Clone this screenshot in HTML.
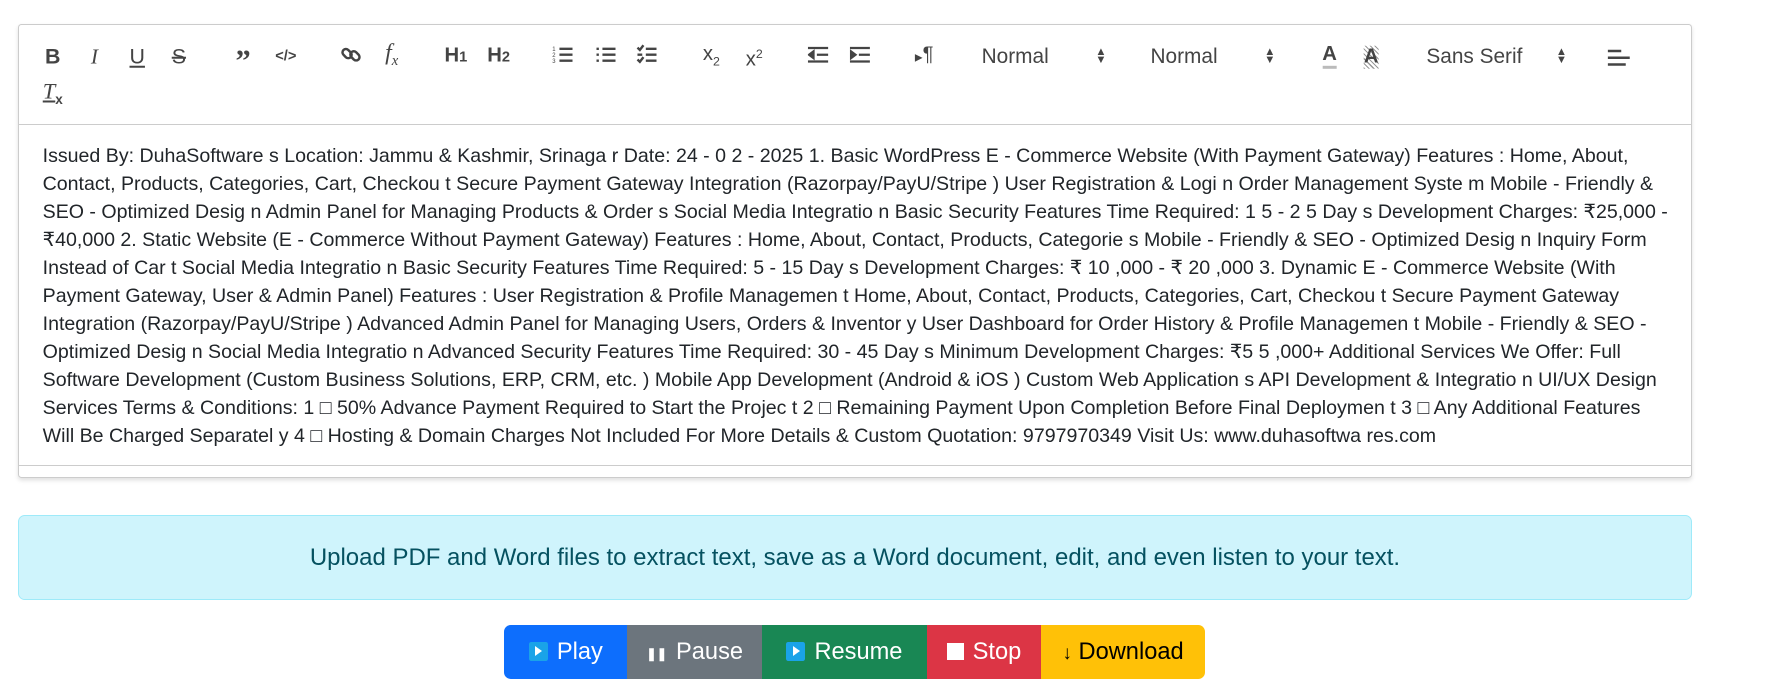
<!DOCTYPE html>
<html><head><meta charset="utf-8"><style>
html,body{margin:0;padding:0;background:#fff;overflow:hidden}
body{width:1568px;height:621px;zoom:1.1259;position:relative;font-family:"Liberation Sans",Arial,sans-serif;color:#212529}
.ed{position:absolute;left:16px;top:21px;width:1485px;height:402px;border:1px solid #ccc;border-radius:3px;box-shadow:0 2px 4px rgba(0,0,0,.12)}
.tb{position:absolute;left:0;top:0;right:0;height:88px;border-bottom:1px solid #ccc}
.i{position:absolute;color:#444;font-size:19px;line-height:20px;transform:translate(-50%,-50%);white-space:nowrap}
.sel{position:absolute;color:#444;font-size:18.5px;transform:translateY(-50%)}
.txt{position:absolute;left:21px;top:104px;font-size:17.4px;line-height:24.9px;white-space:nowrap;color:#212529}
.ln{position:absolute;left:0;right:0;top:391px;border-top:1px solid #ccc}
.al{position:absolute;left:16px;top:457px;width:1485px;height:74px;background:#cff4fc;border:1px solid #9eeaf9;border-radius:6px;color:#055160;font-size:21.3px;text-align:center;line-height:74px}
.bt{position:absolute;top:555px;height:48px;display:flex;left:448px;border-radius:6px;overflow:hidden}
.bt div{height:48px;line-height:48px;font-size:21px;color:#fff;text-align:center;white-space:nowrap}
.pi{display:inline-block;width:17px;height:17px;background:#1aa3e8;border-radius:2px;vertical-align:-2px;margin-right:8px;position:relative}
.pi:after{content:"";position:absolute;left:6px;top:4px;border-left:7px solid #fff;border-top:4.5px solid transparent;border-bottom:4.5px solid transparent}
</style></head><body>
<div class="ed">
<div class="tb">
<span class="i" style="left:30px;top:29px;font-weight:bold">B</span>
<span class="i" style="left:67px;top:29px;font-style:italic;font-family:'Liberation Serif'">I</span>
<span class="i" style="left:105px;top:29px;text-decoration:underline">U</span>
<span class="i" style="left:142px;top:29px;text-decoration:line-through">S</span>
<span class="i" style="left:199px;top:32px;font-weight:bold;font-size:27px;font-family:'Liberation Serif'">”</span>
<span class="i" style="left:237px;top:29px;font-size:13px;font-weight:bold">&lt;/&gt;</span>
<span class="i" style="left:295px;top:29px">
<svg width="20" height="20" viewBox="0 0 20 20" fill="none" stroke="#444" stroke-width="2.2"><rect x="2" y="6" width="9" height="6" rx="3" transform="rotate(45 6.5 9)"/><rect x="9" y="8" width="9" height="6" rx="3" transform="rotate(45 13.5 11)"/></svg></span>
<span class="i" style="left:331px;top:29px;font-family:'Liberation Serif';font-style:italic;font-size:21px">f<sub style="font-size:13px">x</sub></span>
<span class="i" style="left:388px;top:29px;font-weight:bold;font-size:18px">H<span style="font-size:13px">1</span></span>
<span class="i" style="left:426px;top:29px;font-weight:bold;font-size:18px">H<span style="font-size:13px">2</span></span>
<span class="i" style="left:483px;top:29px"><svg width="19" height="19" viewBox="0 0 18 18" stroke="#444" stroke-width="2"><line x1="6" y1="4" x2="17" y2="4"/><line x1="6" y1="9" x2="17" y2="9"/><line x1="6" y1="14" x2="17" y2="14"/><text x="0" y="6" font-size="5" fill="#444" stroke="none">1</text><text x="0" y="11" font-size="5" fill="#444" stroke="none">2</text><text x="0" y="16" font-size="5" fill="#444" stroke="none">3</text></svg></span>
<span class="i" style="left:521px;top:29px"><svg width="19" height="19" viewBox="0 0 18 18" stroke="#444" stroke-width="2"><line x1="6" y1="4" x2="17" y2="4"/><line x1="6" y1="9" x2="17" y2="9"/><line x1="6" y1="14" x2="17" y2="14"/><line x1="1" y1="4" x2="3" y2="4"/><line x1="1" y1="9" x2="3" y2="9"/><line x1="1" y1="14" x2="3" y2="14"/></svg></span>
<span class="i" style="left:558px;top:29px"><svg width="19" height="19" viewBox="0 0 18 18" stroke="#444" stroke-width="2" fill="none"><line x1="8" y1="4" x2="17" y2="4"/><line x1="8" y1="9" x2="17" y2="9"/><line x1="8" y1="14" x2="17" y2="14"/><polyline points="1,3 3,5 6,1"/><polyline points="1,13 3,15 6,11"/><line x1="1" y1="9" x2="5" y2="9"/></svg></span>
<span class="i" style="left:615px;top:30px;font-size:18px">x<sub style="font-size:11px">2</sub></span>
<span class="i" style="left:653px;top:29px;font-size:18px">x<sup style="font-size:11px">2</sup></span>
<span class="i" style="left:710px;top:29px"><svg width="18" height="16" viewBox="0 0 18 16" stroke="#444" stroke-width="2"><line x1="0" y1="2" x2="18" y2="2"/><line x1="8" y1="8" x2="18" y2="8"/><line x1="0" y1="14" x2="18" y2="14"/><polygon points="1,8 5,5 5,11" fill="#444"/></svg></span>
<span class="i" style="left:747px;top:29px"><svg width="18" height="16" viewBox="0 0 18 16" stroke="#444" stroke-width="2"><line x1="0" y1="2" x2="18" y2="2"/><line x1="8" y1="8" x2="18" y2="8"/><line x1="0" y1="14" x2="18" y2="14"/><polygon points="5,8 1,5 1,11" fill="#444"/></svg></span>
<span class="i" style="left:804px;top:29px;font-size:18px"><span style="font-size:9px">▶</span>¶</span>
<span class="sel" style="left:855px;top:29px">Normal</span><span class="i" style="left:961px;top:29px;font-size:10px;line-height:7px">▲<br>▼</span>
<span class="sel" style="left:1005px;top:29px">Normal</span><span class="i" style="left:1111px;top:29px;font-size:10px;line-height:7px">▲<br>▼</span>
<span class="i" style="left:1164px;top:28px;font-weight:bold;font-size:18px;border-bottom:3px solid #bbb;line-height:19px">A</span>
<span class="i" style="left:1201px;top:29px;font-weight:bold;font-size:18px;background:repeating-linear-gradient(45deg,#999 0 1px,#fff 1px 3px)">A</span>
<span class="sel" style="left:1250px;top:29px">Sans Serif</span><span class="i" style="left:1370px;top:29px;font-size:10px;line-height:7px">▲<br>▼</span>
<span class="i" style="left:1421px;top:31px"><svg width="20" height="16" viewBox="0 0 20 16" stroke="#444" stroke-width="2.2"><line x1="0" y1="2" x2="12" y2="2"/><line x1="0" y1="8" x2="20" y2="8"/><line x1="0" y1="14" x2="16" y2="14"/></svg></span>
<span class="i" style="left:30px;top:63px;font-family:'Liberation Serif';font-style:italic;font-size:20px;text-decoration:underline">T<sub style="font-size:12px;font-style:normal;font-weight:bold;font-family:'Liberation Sans'">x</sub></span>
</div>
<div class="txt">Issued By: DuhaSoftware s Location: Jammu &amp; Kashmir, Srinaga r Date: 24 - 0 2 - 2025 1. Basic WordPress E - Commerce Website (With Payment Gateway) Features : Home, About,<br>Contact, Products, Categories, Cart, Checkou t Secure Payment Gateway Integration (Razorpay/PayU/Stripe ) User Registration &amp; Logi n Order Management Syste m Mobile - Friendly &amp;<br>SEO - Optimized Desig n Admin Panel for Managing Products &amp; Order s Social Media Integratio n Basic Security Features Time Required: 1 5 - 2 5 Day s Development Charges: ₹25,000 -<br>₹40,000 2. Static Website (E - Commerce Without Payment Gateway) Features : Home, About, Contact, Products, Categorie s Mobile - Friendly &amp; SEO - Optimized Desig n Inquiry Form<br>Instead of Car t Social Media Integratio n Basic Security Features Time Required: 5 - 15 Day s Development Charges: ₹ 10 ,000 - ₹ 20 ,000 3. Dynamic E - Commerce Website (With<br>Payment Gateway, User &amp; Admin Panel) Features : User Registration &amp; Profile Managemen t Home, About, Contact, Products, Categories, Cart, Checkou t Secure Payment Gateway<br>Integration (Razorpay/PayU/Stripe ) Advanced Admin Panel for Managing Users, Orders &amp; Inventor y User Dashboard for Order History &amp; Profile Managemen t Mobile - Friendly &amp; SEO -<br>Optimized Desig n Social Media Integratio n Advanced Security Features Time Required: 30 - 45 Day s Minimum Development Charges: ₹5 5 ,000+ Additional Services We Offer: Full<br>Software Development (Custom Business Solutions, ERP, CRM, etc. ) Mobile App Development (Android &amp; iOS ) Custom Web Application s API Development &amp; Integratio n UI/UX Design<br>Services Terms &amp; Conditions: 1 □ 50% Advance Payment Required to Start the Projec t 2 □ Remaining Payment Upon Completion Before Final Deploymen t 3 □ Any Additional Features<br>Will Be Charged Separatel y 4 □ Hosting &amp; Domain Charges Not Included For More Details &amp; Custom Quotation: 9797970349 Visit Us: www.duhasoftwa res.com</div>
<div class="ln"></div>
</div>
<div class="al">Upload PDF and Word files to extract text, save as a Word document, edit, and even listen to your text.</div>
<div class="bt">
<div style="width:109px;background:#0d6efd"><span class="pi"></span>Play</div>
<div style="width:120px;background:#6c757d"><span style="font-size:11px;font-weight:bold;margin-right:8px;vertical-align:1px">❚❚</span>Pause</div>
<div style="width:146px;background:#198754"><span class="pi"></span>Resume</div>
<div style="width:102px;background:#dc3545"><span style="display:inline-block;width:15px;height:15px;background:#fff;margin-right:8px;vertical-align:-1px"></span>Stop</div>
<div style="width:145px;background:#ffc107;color:#000"><span style="font-size:17px;font-weight:bold">↓</span> Download</div>
</div>
</body></html>
